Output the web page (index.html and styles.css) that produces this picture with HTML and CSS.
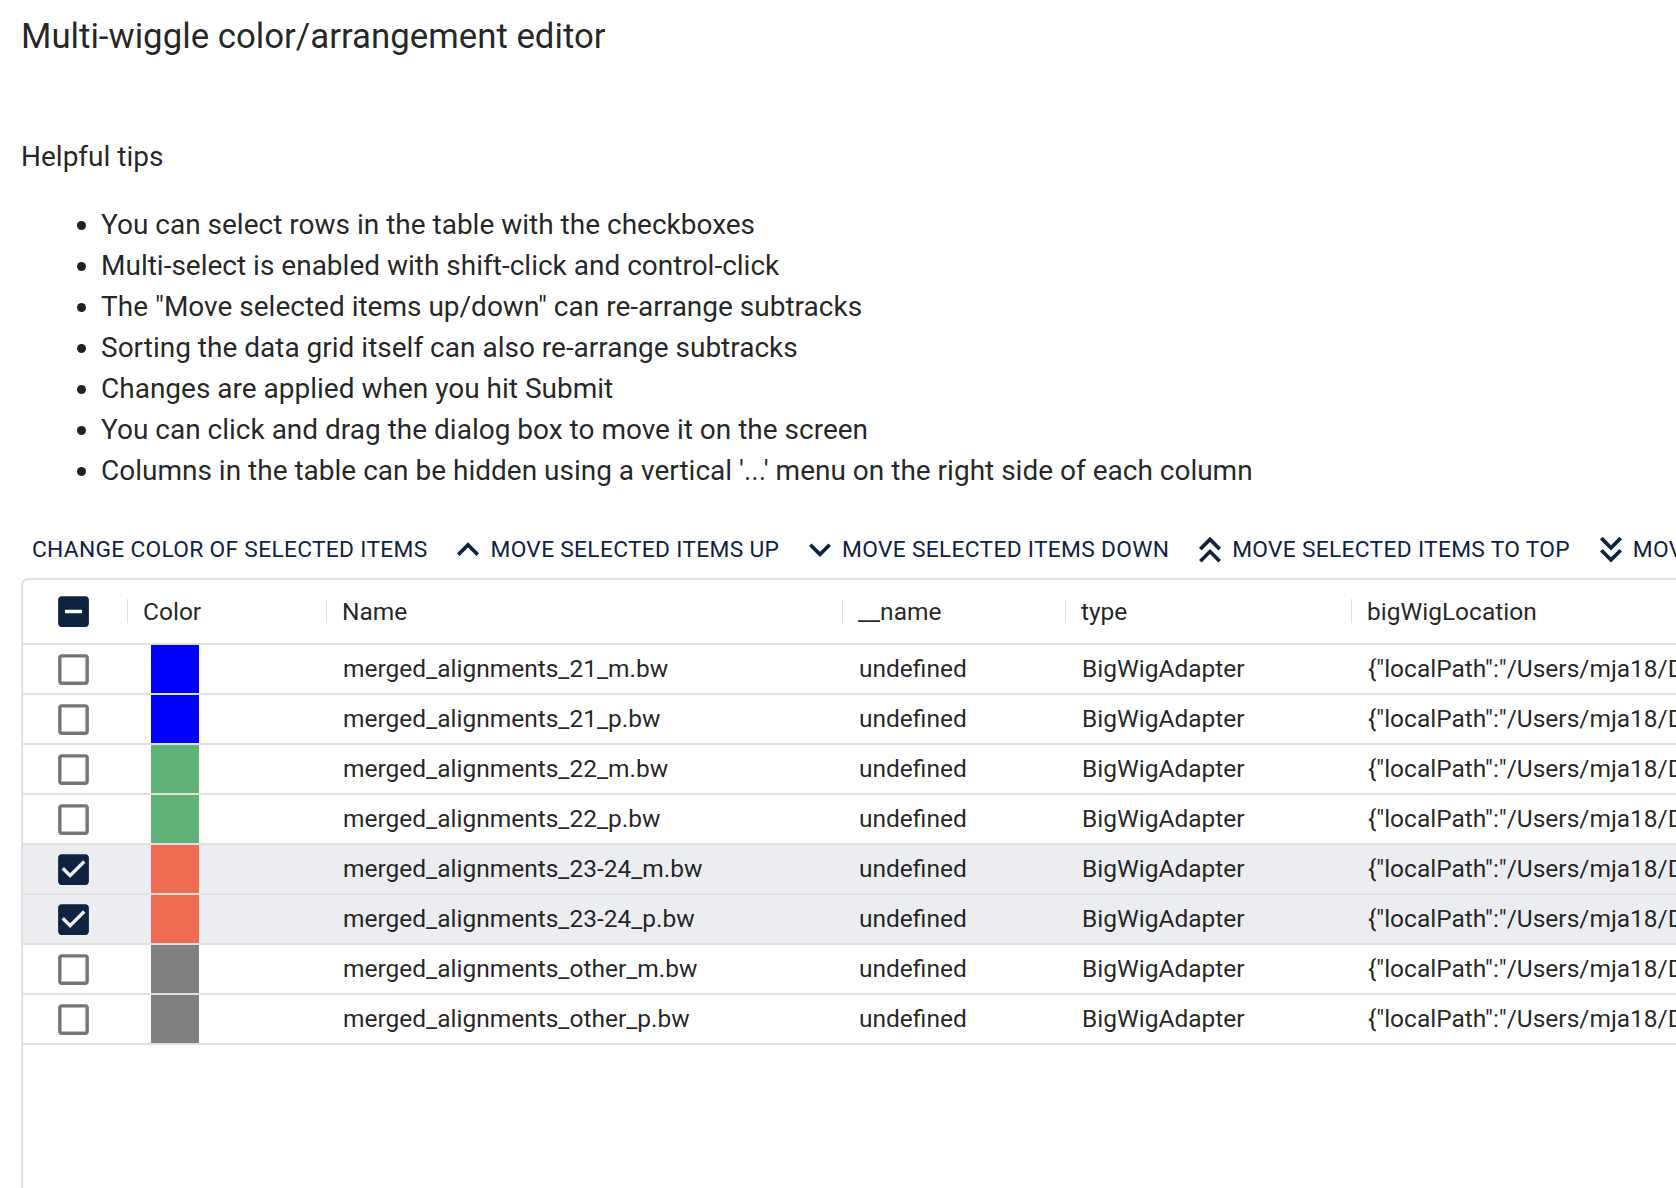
FILE: index.html
```html
<!DOCTYPE html>
<html lang="en">
<head>
<meta charset="utf-8">
<title>Multi-wiggle color/arrangement editor</title>
<link rel="stylesheet" href="styles.css">
</head>
<body>
<div class="page">
  <h1 class="title">Multi-wiggle color/arrangement editor</h1>
  <p class="tips-heading">Helpful tips</p>
  <ul class="tips">
    <li>You can select rows in the table with the checkboxes</li>
    <li>Multi-select is enabled with shift-click and control-click</li>
    <li>The "Move selected items up/down" can re-arrange subtracks</li>
    <li>Sorting the data grid itself can also re-arrange subtracks</li>
    <li>Changes are applied when you hit Submit</li>
    <li>You can click and drag the dialog box to move it on the screen</li>
    <li>Columns in the table can be hidden using a vertical '...' menu on the right side of each column</li>
  </ul>
  <div class="toolbar">
    <button class="btn">Change color of selected items</button>
    <button class="btn"><svg class="btn-icon" viewBox="6 4 12 16"><path d="M7.41 15.41 12 10.83l4.59 4.58L18 14l-6-6-6 6z"/></svg>Move selected items up</button>
    <button class="btn"><svg class="btn-icon" viewBox="6 4 12 16"><path d="M7.41 8.59 12 13.17l4.59-4.58L18 10l-6 6-6-6z"/></svg>Move selected items down</button>
    <button class="btn"><svg class="btn-icon" viewBox="6 4 12 16"><path d="M6 17.59 7.41 19 12 14.42 16.59 19 18 17.59l-6-6z"/><path d="M6 11l1.41 1.41L12 7.83l4.59 4.58L18 11l-6-6z"/></svg>Move selected items to top</button>
    <button class="btn"><svg class="btn-icon" viewBox="6 4 12 16"><path d="M18 6.41 16.59 5 12 9.58 7.41 5 6 6.41l6 6z"/><path d="m18 13-1.41-1.41L12 16.17l-4.59-4.58L6 13l6 6z"/></svg>Move selected items to bottom</button>
  </div>
  <div class="grid">
    <div class="cols header">
      <div class="cell check-cell"><svg class="cb cb-on" viewBox="0 0 24 24"><path d="M19 3H5c-1.1 0-2 .9-2 2v14c0 1.1.9 2 2 2h14c1.1 0 2-.9 2-2V5c0-1.1-.9-2-2-2zm-2 10H7v-2h10v2z"/></svg></div>
      <div class="hcell">Color</div>
      <div class="hcell">Name</div>
      <div class="hcell">__name</div>
      <div class="hcell">type</div>
      <div class="hcell">bigWigLocation</div>
    </div>

    <div class="cols row">
      <div class="cell check-cell"><svg class="cb" viewBox="0 0 24 24"><path d="M19 5v14H5V5h14m0-2H5c-1.11 0-2 .9-2 2v14c0 1.1.89 2 2 2h14c1.11 0 2-.9 2-2V5c0-1.1-.89-2-2-2z"/></svg></div>
      <div class="cell swatch-cell"><span class="swatch" style="background:#0000ff"></span></div>
      <div class="cell">merged_alignments_21_m.bw</div>
      <div class="cell">undefined</div>
      <div class="cell">BigWigAdapter</div>
      <div class="cell">{"localPath":"/Users/mja18/Downloads/merged_alignments_21_m.bw","locationType":"LocalPathLocation"}</div>
    </div>
    <div class="cols row">
      <div class="cell check-cell"><svg class="cb" viewBox="0 0 24 24"><path d="M19 5v14H5V5h14m0-2H5c-1.11 0-2 .9-2 2v14c0 1.1.89 2 2 2h14c1.11 0 2-.9 2-2V5c0-1.1-.89-2-2-2z"/></svg></div>
      <div class="cell swatch-cell"><span class="swatch" style="background:#0000ff"></span></div>
      <div class="cell">merged_alignments_21_p.bw</div>
      <div class="cell">undefined</div>
      <div class="cell">BigWigAdapter</div>
      <div class="cell">{"localPath":"/Users/mja18/Downloads/merged_alignments_21_p.bw","locationType":"LocalPathLocation"}</div>
    </div>
    <div class="cols row">
      <div class="cell check-cell"><svg class="cb" viewBox="0 0 24 24"><path d="M19 5v14H5V5h14m0-2H5c-1.11 0-2 .9-2 2v14c0 1.1.89 2 2 2h14c1.11 0 2-.9 2-2V5c0-1.1-.89-2-2-2z"/></svg></div>
      <div class="cell swatch-cell"><span class="swatch" style="background:#60b277"></span></div>
      <div class="cell">merged_alignments_22_m.bw</div>
      <div class="cell">undefined</div>
      <div class="cell">BigWigAdapter</div>
      <div class="cell">{"localPath":"/Users/mja18/Downloads/merged_alignments_22_m.bw","locationType":"LocalPathLocation"}</div>
    </div>
    <div class="cols row">
      <div class="cell check-cell"><svg class="cb" viewBox="0 0 24 24"><path d="M19 5v14H5V5h14m0-2H5c-1.11 0-2 .9-2 2v14c0 1.1.89 2 2 2h14c1.11 0 2-.9 2-2V5c0-1.1-.89-2-2-2z"/></svg></div>
      <div class="cell swatch-cell"><span class="swatch" style="background:#60b277"></span></div>
      <div class="cell">merged_alignments_22_p.bw</div>
      <div class="cell">undefined</div>
      <div class="cell">BigWigAdapter</div>
      <div class="cell">{"localPath":"/Users/mja18/Downloads/merged_alignments_22_p.bw","locationType":"LocalPathLocation"}</div>
    </div>
    <div class="cols row selected">
      <div class="cell check-cell"><svg class="cb cb-on" viewBox="0 0 24 24"><path d="M19 3H5c-1.11 0-2 .9-2 2v14c0 1.1.89 2 2 2h14c1.11 0 2-.9 2-2V5c0-1.1-.89-2-2-2zm-9 14l-5-5 1.41-1.41L10 14.17l7.59-7.59L19 8l-9 9z"/></svg></div>
      <div class="cell swatch-cell"><span class="swatch" style="background:#ee6d52"></span></div>
      <div class="cell">merged_alignments_23-24_m.bw</div>
      <div class="cell">undefined</div>
      <div class="cell">BigWigAdapter</div>
      <div class="cell">{"localPath":"/Users/mja18/Downloads/merged_alignments_23-24_m.bw","locationType":"LocalPathLocation"}</div>
    </div>
    <div class="cols row selected">
      <div class="cell check-cell"><svg class="cb cb-on" viewBox="0 0 24 24"><path d="M19 3H5c-1.11 0-2 .9-2 2v14c0 1.1.89 2 2 2h14c1.11 0 2-.9 2-2V5c0-1.1-.89-2-2-2zm-9 14l-5-5 1.41-1.41L10 14.17l7.59-7.59L19 8l-9 9z"/></svg></div>
      <div class="cell swatch-cell"><span class="swatch" style="background:#ee6d52"></span></div>
      <div class="cell">merged_alignments_23-24_p.bw</div>
      <div class="cell">undefined</div>
      <div class="cell">BigWigAdapter</div>
      <div class="cell">{"localPath":"/Users/mja18/Downloads/merged_alignments_23-24_p.bw","locationType":"LocalPathLocation"}</div>
    </div>
    <div class="cols row">
      <div class="cell check-cell"><svg class="cb" viewBox="0 0 24 24"><path d="M19 5v14H5V5h14m0-2H5c-1.11 0-2 .9-2 2v14c0 1.1.89 2 2 2h14c1.11 0 2-.9 2-2V5c0-1.1-.89-2-2-2z"/></svg></div>
      <div class="cell swatch-cell"><span class="swatch" style="background:#808080"></span></div>
      <div class="cell">merged_alignments_other_m.bw</div>
      <div class="cell">undefined</div>
      <div class="cell">BigWigAdapter</div>
      <div class="cell">{"localPath":"/Users/mja18/Downloads/merged_alignments_other_m.bw","locationType":"LocalPathLocation"}</div>
    </div>
    <div class="cols row">
      <div class="cell check-cell"><svg class="cb" viewBox="0 0 24 24"><path d="M19 5v14H5V5h14m0-2H5c-1.11 0-2 .9-2 2v14c0 1.1.89 2 2 2h14c1.11 0 2-.9 2-2V5c0-1.1-.89-2-2-2z"/></svg></div>
      <div class="cell swatch-cell"><span class="swatch" style="background:#808080"></span></div>
      <div class="cell">merged_alignments_other_p.bw</div>
      <div class="cell">undefined</div>
      <div class="cell">BigWigAdapter</div>
      <div class="cell">{"localPath":"/Users/mja18/Downloads/merged_alignments_other_p.bw","locationType":"LocalPathLocation"}</div>
    </div>
  </div>
</div>
</body>
</html>
```

FILE: styles.css
```css
html, body {
  margin: 0;
  padding: 0;
  overflow: hidden;
  background: #ffffff;
}

body {
  font-family: Roboto, "Liberation Sans", Arial, sans-serif;
  color: rgba(0, 0, 0, 0.87);
  width: 1676px;
  height: 1188px;
}

.page {
  padding-left: 21px;
}

.title {
  margin: 0;
  padding-top: 8px;
  font-size: 34.8px;
  line-height: 56px;
  font-weight: 400;
}

.tips-heading {
  margin: 72px 0 0;
  font-size: 28px;
  line-height: 42px;
}

.tips {
  margin: 26px 0 0;
  padding-left: 80px;
  font-size: 28px;
  line-height: 41px;
}

.toolbar {
  display: flex;
  gap: 12px;
  margin: 32px 0 0 2px;
  white-space: nowrap;
}

.btn {
  display: flex;
  align-items: center;
  flex: none;
  border: 0;
  background: transparent;
  padding: 7px 9px;
  font-family: Roboto, "Liberation Sans", Arial, sans-serif;
  font-size: 22.75px;
  line-height: 40px;
  font-weight: 400;
  letter-spacing: 0.3px;
  text-transform: uppercase;
  color: #0d233f;
}

.btn-icon {
  width: 22px;
  height: 29.33px;
  margin-right: 11px;
  fill: #0d233f;
  flex: none;
}

.grid {
  margin-top: 1px;
  width: 2400px;
  height: 700px;
  border: 2px solid #e0e0e0;
  border-radius: 7px;
  box-sizing: border-box;
}

.cols {
  display: grid;
  grid-template-columns: 104px 199px 516px 223px 286px 1200px;
  border-bottom: 2px solid #e0e0e0;
}

.header {
  height: 63px;
}

.row {
  height: 48px;
}

.row.selected {
  background: #ecedf0;
}

.cell {
  display: flex;
  align-items: center;
  padding: 0 17px 1px;
  font-size: 24.5px;
  white-space: nowrap;
  overflow: hidden;
}

.hcell {
  display: flex;
  align-items: center;
  padding-bottom: 1px;
  font-size: 24.5px;
  white-space: nowrap;
  overflow: hidden;
}

.hcell::before {
  content: "";
  width: 2px;
  height: 24px;
  background: #e0e0e0;
  margin-left: -1px;
  margin-right: 15px;
  flex: none;
}

.check-cell {
  padding: 0 0 0 30px;
}

.cb {
  width: 41px;
  height: 41px;
  fill: rgba(0, 0, 0, 0.54);
  flex: none;
}

.cb.cb-on {
  fill: #0d233f;
}

.swatch-cell {
  padding: 0 0 0 24px;
  align-items: stretch;
}

.swatch {
  display: block;
  width: 48px;
}
```
